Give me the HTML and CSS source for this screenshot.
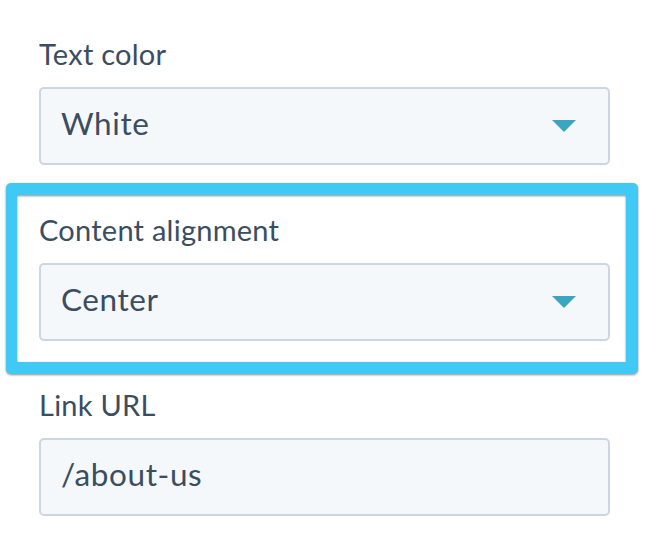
FILE: index.html
```html
<!DOCTYPE html>
<html lang="en">
<head>
<meta charset="utf-8">
<title>Module settings</title>
<link rel="stylesheet" href="styles.css">
</head>
<body>
<main class="panel">
  <div class="field">
    <label class="field-label">Text color</label>
    <div class="select">
      <span class="select-value">White</span>
      <span class="caret"></span>
    </div>
  </div>
  <div class="field field-highlight">
    <label class="field-label">Content alignment</label>
    <div class="select">
      <span class="select-value">Center</span>
      <span class="caret"></span>
    </div>
  </div>
  <div class="field">
    <label class="field-label">Link URL</label>
    <div class="input">
      <span class="select-value">/about-us</span>
    </div>
  </div>
</main>
</body>
</html>
```
FILE: styles.css
```css
html, body {
  margin: 0;
  padding: 0;
  background: #ffffff;
}

body {
  font-family: Lato, "Open Sans", "Liberation Sans", sans-serif;
  color: #33475b;
}

.panel {
  padding: 37px 0 0 39px;
  width: 571px;
  display: flex;
  flex-direction: column;
  gap: 47.5px;
}

.field {
  display: flex;
  flex-direction: column;
  position: relative;
}

.field-label {
  display: block;
  font-size: 29px;
  line-height: 34px;
  letter-spacing: 0.25px;
  margin-bottom: 16px;
  color: #3a4d61;
}

.select,
.input {
  box-sizing: border-box;
  height: 78px;
  border: 2px solid #cbd6e2;
  border-radius: 5px;
  background: #f5f8fa;
  display: flex;
  align-items: center;
  justify-content: space-between;
  padding: 0 32px 0 20px;
}

.select-value {
  font-size: 31.5px;
  line-height: 37px;
  letter-spacing: 0.6px;
  padding-bottom: 5px;
  color: #3a4d61;
}

.caret {
  width: 0;
  height: 0;
  border-left: 12px solid transparent;
  border-right: 12px solid transparent;
  border-top: 12px solid #3aa6c0;
}

.field-highlight::after {
  content: "";
  position: absolute;
  top: -30px;
  bottom: -33px;
  left: -33px;
  right: -28px;
  border-style: solid;
  border-color: #40c9f4;
  border-width: 12px 12px 12px 11px;
  border-radius: 5px;
  filter: drop-shadow(0 1.5px 0.8px rgba(0, 0, 0, 0.45));
  pointer-events: none;
}
```
